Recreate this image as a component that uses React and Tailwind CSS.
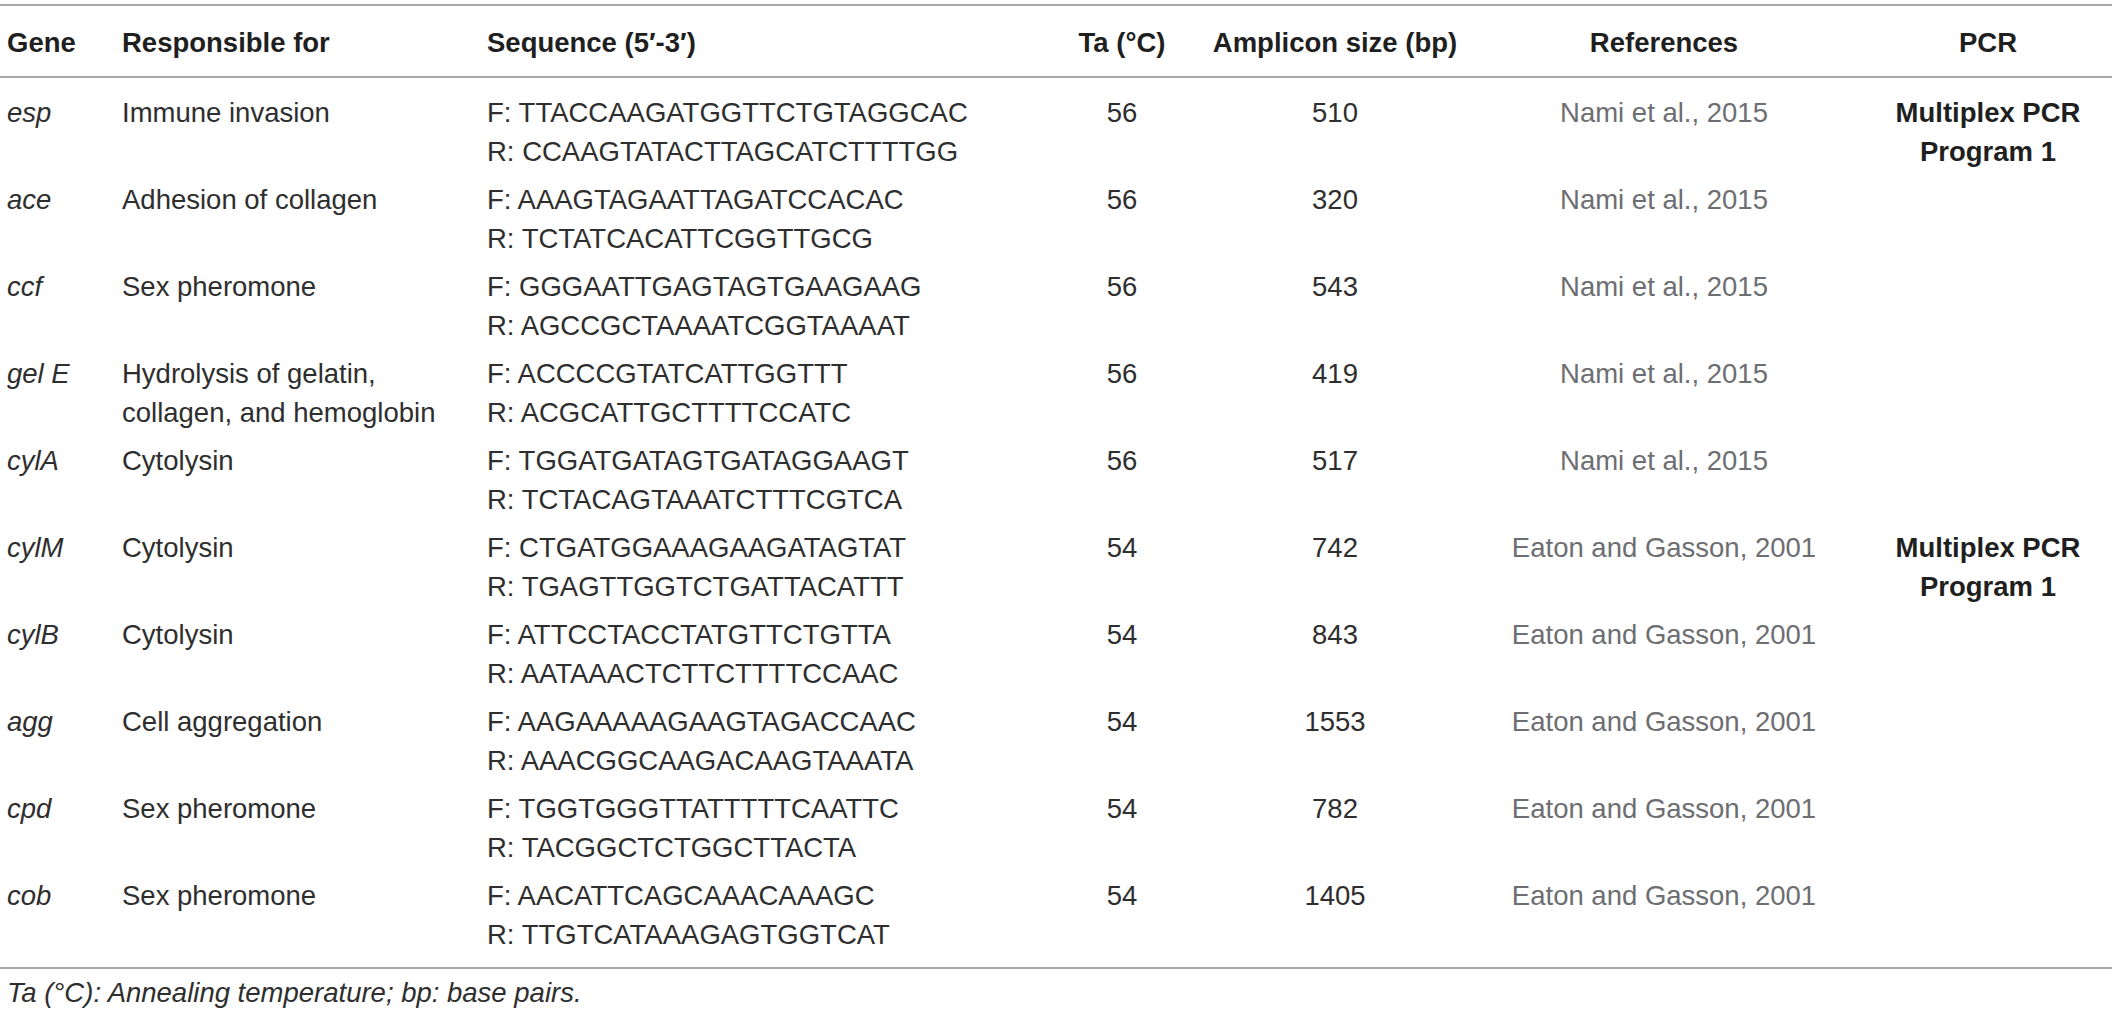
import React from 'react';

const rows = [
  { gene: 'esp', role: ['Immune invasion'], f: 'TTACCAAGATGGTTCTGTAGGCAC', r: 'CCAAGTATACTTAGCATCTTTTGG', ta: 56, size: 510, ref: 'Nami et al., 2015', pcr: true },
  { gene: 'ace', role: ['Adhesion of collagen'], f: 'AAAGTAGAATTAGATCCACAC', r: 'TCTATCACATTCGGTTGCG', ta: 56, size: 320, ref: 'Nami et al., 2015' },
  { gene: 'ccf', role: ['Sex pheromone'], f: 'GGGAATTGAGTAGTGAAGAAG', r: 'AGCCGCTAAAATCGGTAAAAT', ta: 56, size: 543, ref: 'Nami et al., 2015' },
  { gene: 'gel E', role: ['Hydrolysis of gelatin,', 'collagen, and hemoglobin'], f: 'ACCCCGTATCATTGGTTT', r: 'ACGCATTGCTTTTCCATC', ta: 56, size: 419, ref: 'Nami et al., 2015' },
  { gene: 'cylA', role: ['Cytolysin'], f: 'TGGATGATAGTGATAGGAAGT', r: 'TCTACAGTAAATCTTTCGTCA', ta: 56, size: 517, ref: 'Nami et al., 2015' },
  { gene: 'cylM', role: ['Cytolysin'], f: 'CTGATGGAAAGAAGATAGTAT', r: 'TGAGTTGGTCTGATTACATTT', ta: 54, size: 742, ref: 'Eaton and Gasson, 2001', pcr: true },
  { gene: 'cylB', role: ['Cytolysin'], f: 'ATTCCTACCTATGTTCTGTTA', r: 'AATAAACTCTTCTTTTCCAAC', ta: 54, size: 843, ref: 'Eaton and Gasson, 2001' },
  { gene: 'agg', role: ['Cell aggregation'], f: 'AAGAAAAAGAAGTAGACCAAC', r: 'AAACGGCAAGACAAGTAAATA', ta: 54, size: 1553, ref: 'Eaton and Gasson, 2001' },
  { gene: 'cpd', role: ['Sex pheromone'], f: 'TGGTGGGTTATTTTTCAATTC', r: 'TACGGCTCTGGCTTACTA', ta: 54, size: 782, ref: 'Eaton and Gasson, 2001' },
  { gene: 'cob', role: ['Sex pheromone'], f: 'AACATTCAGCAAACAAAGC', r: 'TTGTCATAAAGAGTGGTCAT', ta: 54, size: 1405, ref: 'Eaton and Gasson, 2001' },
];

const cols = 'grid grid-cols-[122px_365px_563px_144px_282px_376px_1fr]';

const Rule = () => <div className="h-[2px] bg-[#a8a8a8]" />;

export default function App() {
  return (
    <div className="w-[2112px] pt-[4px] bg-white font-['Liberation_Sans',Arial,sans-serif] text-[27.5px] leading-[39px] text-[#2e2e2e]">
      <Rule />

      {/* Header */}
      <div className={`${cols} pt-[17px] pb-[14px] font-bold text-[#1f1f1f]`}>
        <div className="pl-[7px]">Gene</div>
        <div>Responsible for</div>
        <div>Sequence (5′-3′)</div>
        <div className="text-center">Ta (°C)</div>
        <div className="text-center">Amplicon size (bp)</div>
        <div className="text-center">References</div>
        <div className="pl-[12px] text-center">PCR</div>
      </div>

      <Rule />

      {/* Body */}
      <div className="pt-[11px] pb-[8px]">
        {rows.map((row) => (
          <div key={row.gene} className={`${cols} pt-[4px] pb-[5px]`}>
            <div className="pl-[7px] italic">{row.gene}</div>
            <div>
              {row.role.map((line) => (
                <div key={line}>{line}</div>
              ))}
            </div>
            <div>
              <div>F: {row.f}</div>
              <div>R: {row.r}</div>
            </div>
            <div className="text-center">{row.ta}</div>
            <div className="text-center">{row.size}</div>
            <div className="text-center text-[#6d6e71]">{row.ref}</div>
            <div className="pl-[12px] text-center font-bold text-[#1f1f1f]">
              {row.pcr && (
                <>
                  <div>Multiplex PCR</div>
                  <div>Program 1</div>
                </>
              )}
            </div>
          </div>
        ))}
      </div>

      <Rule />

      <div className="mt-[4px] pl-[7px] italic">
        Ta (°C): Annealing temperature; bp: base pairs.
      </div>
    </div>
  );
}
